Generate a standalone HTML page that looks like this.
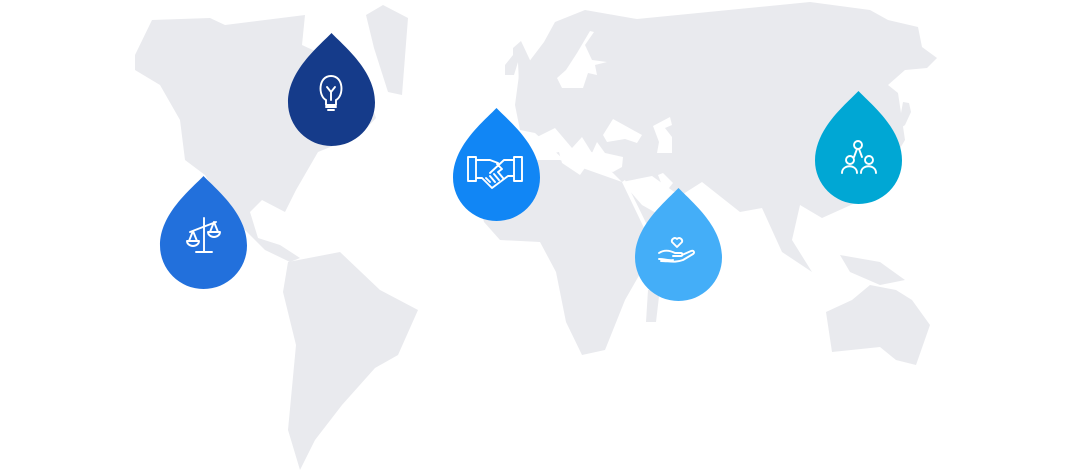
<!DOCTYPE html>
<html><head><meta charset="utf-8"><style>
html,body{margin:0;padding:0;background:#fff;width:1070px;height:472px;overflow:hidden}
svg{display:block}
</style></head><body>
<svg width="1070" height="472" viewBox="0 0 1070 472" xmlns="http://www.w3.org/2000/svg">
<defs>
<path id="drop" d="M43.5 0 C30 14 0 38 0 69.5 A43.5 43.5 0 0 0 87 69.5 C87 38 57 14 43.5 0Z"/>
</defs>
<g fill="#e9eaee">
<polygon points="135,55 152,20 210,18 225,25 305,15 302,45 360,72 376,118 360,135 318,152 296,190 285,212 262,200 250,212 258,238 280,245 300,258 290,262 265,250 245,230 220,200 205,175 185,160 180,120 160,85 135,70"/>
<polygon points="366,15 383,5 408,18 402,95 388,92 374,48"/>
<polygon points="288,262 340,252 380,290 418,310 398,355 375,368 342,405 315,440 300,470 288,430 296,345 283,292"/>
<polygon points="519,75 544,42 555,22 585,10 637,19 810,2 870,10 888,20 918,27 922,47 937,58 927,68 905,70 888,85 898,93 905,140 890,165 870,190 862,200 822,218 800,205 792,240 812,272 782,252 762,208 740,212 702,182 680,196 652,176 622,182 592,152 562,158 545,142 535,133 520,130 515,105"/>
<polygon points="472,180 520,160 560,160 622,182 642,205 665,218 645,265 625,300 605,350 582,355 566,322 556,272 540,242 500,240 484,222"/>
<polygon points="648,290 660,288 656,322 646,322"/>
<polygon points="826,312 852,300 870,285 896,290 912,300 930,325 916,365 896,360 880,347 832,352"/>
<polygon points="840,255 880,262 905,280 880,285 850,272"/>
<polygon points="505,65 513,55 513,48 521,41 537,75 533,80 519,84 518,62 514,75 505,75"/>
<polygon points="903,102 909,103 911,112 905,125 898,130"/>
</g>
<g fill="#fff">
<polygon points="537,137 555,128 572,148 582,137 592,153 597,142 605,153 623,157 622,167 613,172 587,165 580,175 562,163 559,152 533,157"/>
<polygon points="603,135 613,119 642,135 637,143 625,139 607,142"/>
<polygon points="653,126 670,117 672,125 665,128 672,137 672,153 657,153 659,142"/>
<polygon points="622,182 625,180 648,227 645,230"/>
<polygon points="658,175 663,173 673,183 665,193"/>
<polygon points="577,53 590,31 594,32 585,45 592,60 607,62 595,65 597,75 588,73 583,88 562,88 557,78 566,70"/>
</g>
<g transform="translate(288,33)"><use href="#drop" fill="#153b8a"/></g>
<g transform="translate(453,108)"><use href="#drop" fill="#1186f5"/></g>
<g transform="translate(160,176)"><use href="#drop" fill="#2270dc"/></g>
<g transform="translate(635,188)"><use href="#drop" fill="#44aef8"/></g>
<g transform="translate(815,91)"><use href="#drop" fill="#00a7d4"/></g>
<g fill="none" stroke="#fff" stroke-width="1.9" stroke-linecap="round" stroke-linejoin="round">
<path d="M326 100 C318 96 318 76 331 76 C344 76 344 96 336 100 L336 105 L326 105Z M326 107 h10 M328 110 h6 M331 100 v-8 M327 87 l4 5 l4 -5"/>
<path d="M468 157 h8 v24 h-8Z M514 157 h8 v24 h-8Z M476 160 h14 l8 3 M514 160 h-10 l-14 13 M476 178 h6 l10 10 l16 -12 l6 0 M486 178 l4 4 M490 176 l5 6 M494 174 l5 6 M498 172 l5 6 M497 164 l5 5 l-4 3"/>
<path d="M204 252 v-34 M196 252 h16 M190 232 l26 -10 M193 231 l-4 10 M193 231 l4 10 M187 241 a6 5 0 0 0 12 0Z M187 241 h12 M214 222 l-4 10 M214 222 l4 10 M208 232 a6 5 0 0 0 12 0Z"/>
<path d="M677 247 l-5 -5 a3 3 0 0 1 5 -3 a3 3 0 0 1 5 3Z M659 253 c6 -4 12 -2 16 0 h6 c2 0 2 3 0 3 h-8 M682 255 l9 -4 c3 -1 4 2 2 3 l-10 6 c-8 3 -14 1 -22 1 M659 259 c5 0 12 2 14 1"/>
<circle cx="858" cy="145" r="4"/><circle cx="850" cy="160" r="4"/><circle cx="869" cy="160" r="4"/>
<path d="M842 173 c0 -9 15 -9 15 0 M861 173 c0 -9 15 -9 15 0 M854 157 l3 -8 M862 157 l-3 -8"/>
</g>
</svg>
</body></html>
